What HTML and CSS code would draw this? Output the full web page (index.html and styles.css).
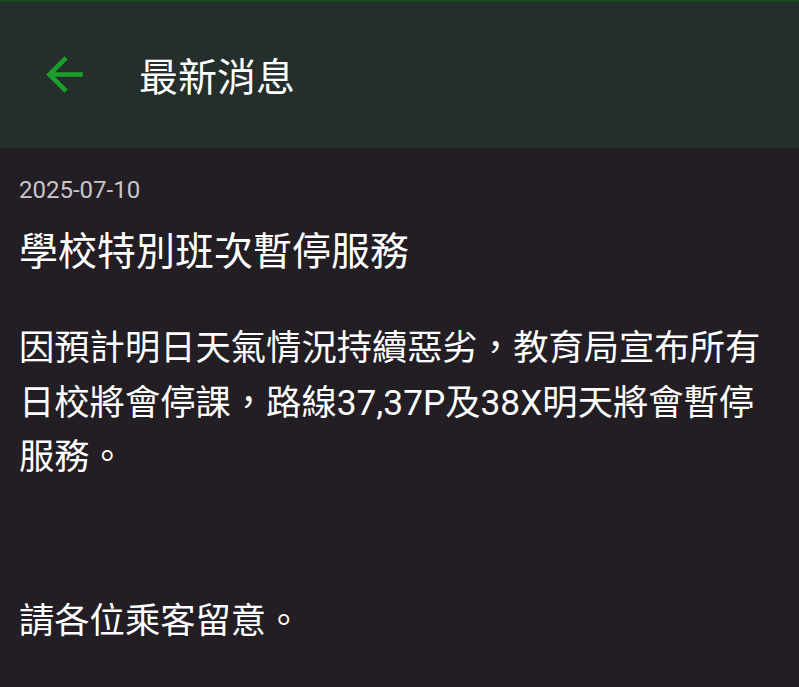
FILE: index.html
```html
<!DOCTYPE html>
<html lang="zh-Hant">
<head>
<meta charset="utf-8">
<link rel="stylesheet" href="styles.css">
</head>
<body>
<header class="appbar">
  <div class="back">
    <svg viewBox="0 0 24 24" width="55" height="55"><path fill="#1c9e2a" d="M20 11H7.83l5.59-5.59L12 4l-8 8 8 8 1.41-1.41L7.83 13H20v-2z"/></svg>
  </div>
  <h1 class="title">最新消息</h1>
</header>
<main class="content">
  <div class="date">2025-07-10</div>
  <h2 class="headline">學校特別班次暫停服務</h2>
  <p class="body">因預計明日天氣情況持續惡劣，教育局宣布所有日校將會停課，路線37,37P及38X明天將會暫停服務。


請各位乘客留意。</p>
</main>
</body>
</html>
```
FILE: styles.css
```css
html, body {
  margin: 0;
  padding: 0;
}
body {
  width: 799px;
  height: 687px;
  overflow: hidden;
  background: #221e24;
  font-family: Roboto, "Noto Sans CJK TC", sans-serif;
  color: #ffffff;
}
.appbar {
  height: 146px;
  background: #242e2a;
  border-top: 2px solid #1b4a1f;
  display: flex;
  align-items: center;
}
.back {
  width: 55px;
  height: 55px;
  margin-left: 37px;
  margin-top: -2px;
  display: flex;
}
.title {
  margin: 6px 0 0 47px;
  font-weight: 400;
  font-size: 39px;
  line-height: 1;
}
.content {
  padding: 0 19px;
}
.date {
  margin-top: 27px;
  font-size: 24px;
  line-height: 30px;
  color: #c9c5ca;
}
.headline {
  margin: 18px 0 0;
  font-weight: 400;
  font-size: 39px;
  line-height: 50px;
  font-family: "Noto Sans CJK TC", sans-serif;
}
.body {
  margin: 48px 0 0;
  font-size: 35.3px;
  line-height: 54.5px;
  white-space: pre-line;
  font-family: Roboto, "Noto Sans CJK TC", sans-serif;
}
```
